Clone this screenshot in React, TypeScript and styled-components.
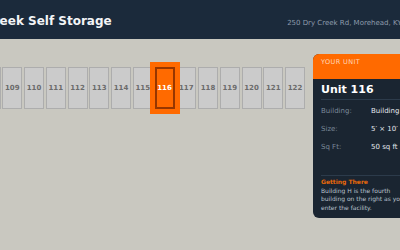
import React from "react";
import styled, { createGlobalStyle } from "styled-components";

const Global = createGlobalStyle`
  html, body { margin: 0; padding: 0; }
  body {
    background: #c9c8c0;
    font-family: "DejaVu Sans", Verdana, sans-serif;
    overflow: hidden;
    width: 400px;
    height: 250px;
  }
`;

const Viewport = styled.div`
  width: 400px;
  height: 250px;
  overflow: hidden;
  display: flex;
  justify-content: center;
`;

const Page = styled.div`
  flex-shrink: 0;
  width: 534px;
  min-height: 250px;
  display: flex;
  flex-direction: column;
`;

const Header = styled.header`
  box-sizing: border-box;
  height: 39px;
  background: #1b2a3b;
  display: flex;
  align-items: baseline;
  justify-content: space-between;
  padding: 14px 41px 0 24px;
`;

const Title = styled.h1`
  margin: 0;
  font-size: 12px;
  line-height: 14px;
  font-weight: bold;
  color: #f2f4f6;
`;

const Address = styled.span`
  font-size: 7px;
  line-height: 14px;
  color: #8e9bab;
`;

const Main = styled.main`
  display: flex;
  align-items: flex-start;
  gap: 8px;
  padding: 15px 46px 0 24px;
`;

const UnitRow = styled.div`
  flex: 1;
  min-width: 0;
  display: flex;
  justify-content: flex-end;
  gap: 1.75px;
  margin-top: 13px;
`;

const Unit = styled.div<{ $active?: boolean }>`
  position: relative;
  box-sizing: border-box;
  flex-shrink: 0;
  width: 20px;
  height: 42px;
  display: flex;
  align-items: center;
  justify-content: center;
  font-size: 7px;
  font-weight: bold;
  background: ${(p) => (p.$active ? "#ff6a00" : "#cbcbcb")};
  color: ${(p) => (p.$active ? "#ffffff" : "#6b6b6b")};
  border: ${(p) => (p.$active ? "2px solid #963600" : "1px solid #adadad")};
  box-shadow: ${(p) => (p.$active ? "0 0 0 5px #ff6a00" : "none")};
  z-index: ${(p) => (p.$active ? 2 : 1)};
`;

const Card = styled.aside`
  flex-shrink: 0;
  width: 108px;
  background: #1a2531;
  border-radius: 6px;
  overflow: hidden;
`;

const CardHead = styled.div`
  box-sizing: border-box;
  height: 25px;
  background: #ff6a00;
  padding: 4px 8px 0;
  font-size: 6.5px;
  line-height: 8px;
  letter-spacing: 0.4px;
  color: #ffd8bd;
`;

const CardBody = styled.div`
  padding: 0 8px 5px;
`;

const UnitName = styled.div`
  font-size: 11px;
  line-height: 13px;
  font-weight: bold;
  color: #ffffff;
  padding: 4px 0 3px;
  border-bottom: 1px solid #2c3b4b;
  white-space: nowrap;
`;

const Facts = styled.dl`
  display: grid;
  grid-template-columns: 50px 1fr;
  grid-auto-rows: 18px;
  align-items: center;
  margin: 2px 0 0;
  padding-bottom: 19px;
  border-bottom: 1px solid #2c3b4b;
  font-size: 7px;
  white-space: nowrap;
`;

const Label = styled.dt`
  color: #7b8999;
`;

const Value = styled.dd`
  margin: 0;
  color: #e4e8ee;
`;

const Directions = styled.div`
  padding-top: 2px;
  font-size: 6px;
  line-height: 8.7px;
`;

const DirHead = styled.div`
  color: #e8690a;
  font-weight: bold;
`;

const DirText = styled.p`
  margin: 0;
  color: #b9c2cd;
`;

const units = [106, 107, 108, 109, 110, 111, 112, 113, 114, 115, 116, 117, 118, 119, 120, 121, 122];

export default function App() {
  return (
    <>
      <Global />
      <Viewport>
        <Page>
          <Header>
            <Title>Dry Creek Self Storage</Title>
            <Address>250 Dry Creek Rd, Morehead, KY 40351</Address>
          </Header>
          <Main>
            <UnitRow>
              {units.map((u) => (
                <Unit key={u} $active={u === 116}>
                  {u}
                </Unit>
              ))}
            </UnitRow>
            <Card>
              <CardHead>YOUR UNIT</CardHead>
              <CardBody>
                <UnitName>Unit 116</UnitName>
                <Facts>
                  <Label>Building:</Label>
                  <Value>Building H</Value>
                  <Label>Size:</Label>
                  <Value>5′ × 10′</Value>
                  <Label>Sq Ft:</Label>
                  <Value>50 sq ft</Value>
                </Facts>
                <Directions>
                  <DirHead>Getting There</DirHead>
                  <DirText>
                    Building H is the fourth building on the right as you enter the facility.
                  </DirText>
                </Directions>
              </CardBody>
            </Card>
          </Main>
        </Page>
      </Viewport>
    </>
  );
}
